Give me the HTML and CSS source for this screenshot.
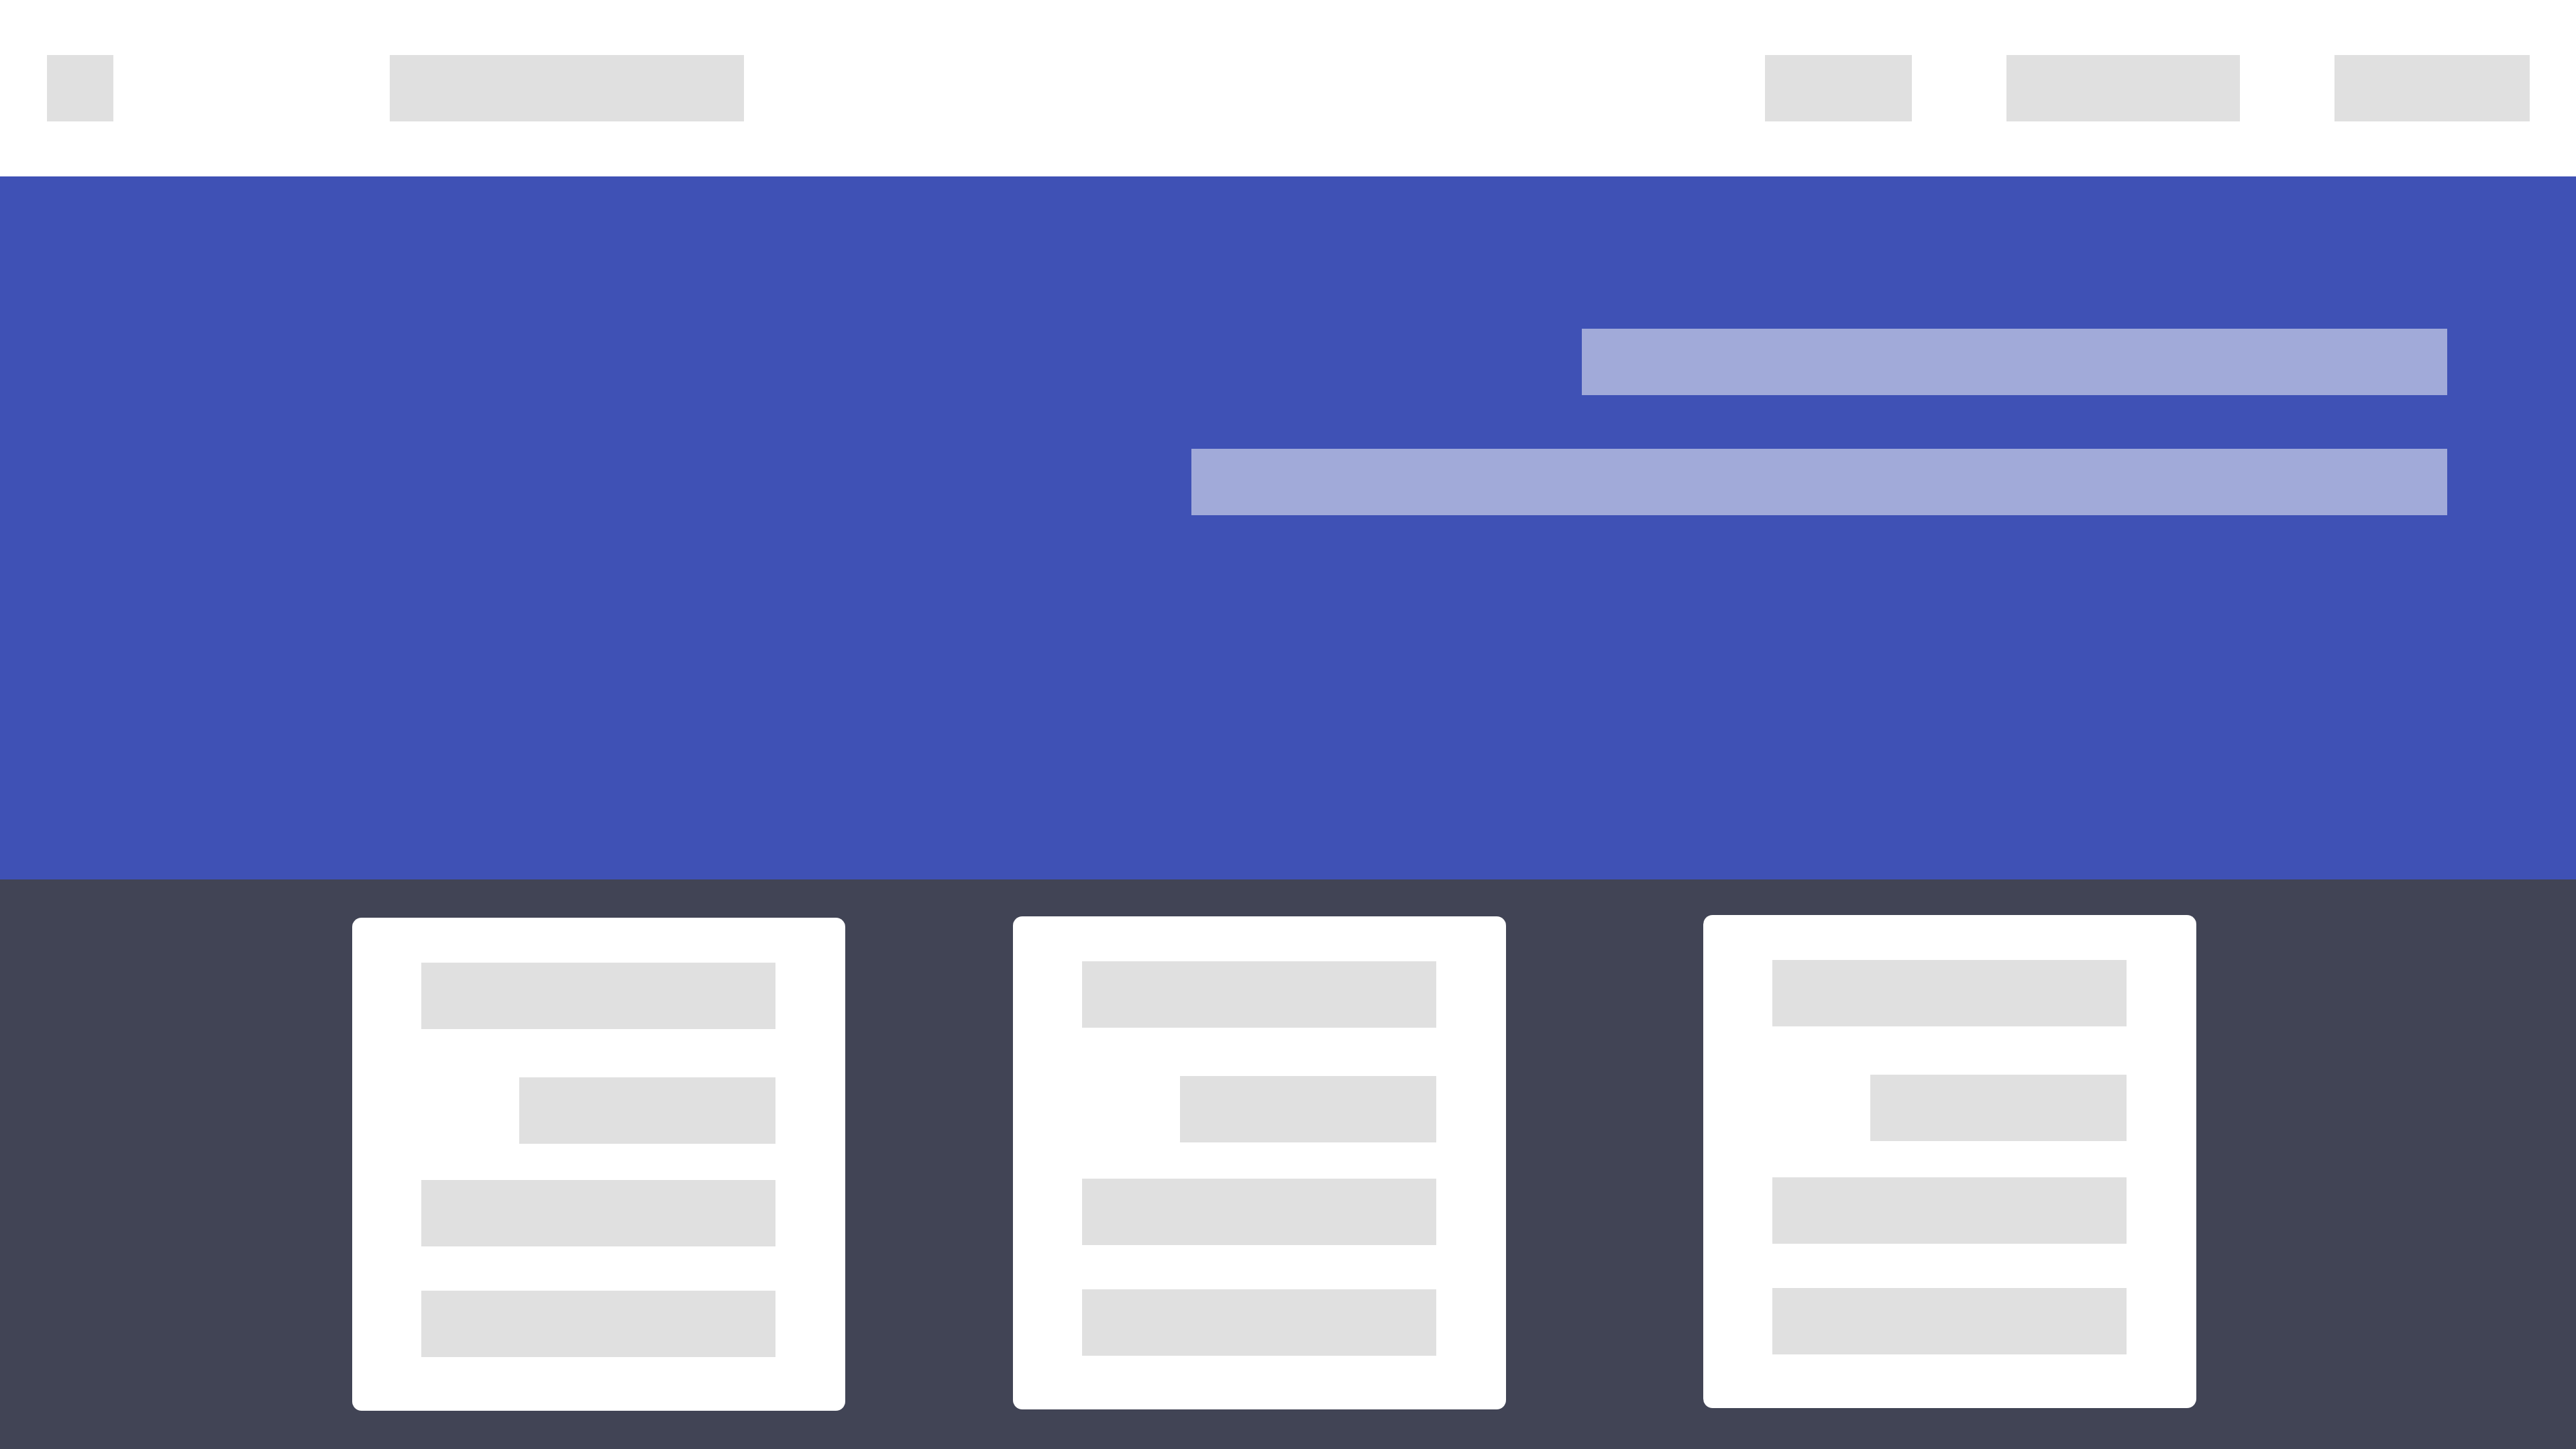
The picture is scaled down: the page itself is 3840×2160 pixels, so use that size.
FILE: index.html
```html
<!DOCTYPE html>
<html>
	<head>
		<meta charset="utf-8" />
		<title>Layout</title>
		<link rel="stylesheet" href="styles.css">
	</head>
	<body>
		<div class="header">
			<div class="block logo"></div>
			<div class="block title"></div>
			<div class="menu">
				<div class="block m1"></div>
				<div class="block m2"></div>
				<div class="block m3"></div>
			</div>
		</div>
		<div class="hero">
			<div class="line l1"></div>
			<div class="line l2"></div>
		</div>
		<div class="cards">
			<div class="card">
				<div class="row"></div>
				<div class="row short"></div>
				<div class="row r3"></div>
				<div class="row r4"></div>
			</div>
			<div class="card c2">
				<div class="row"></div>
				<div class="row short"></div>
				<div class="row r3"></div>
				<div class="row r4"></div>
			</div>
			<div class="card c3">
				<div class="row"></div>
				<div class="row short"></div>
				<div class="row r3"></div>
				<div class="row r4"></div>
			</div>
		</div>
	</body>
</html>
```

FILE: styles.css
```css
*{
	margin: 0;
	padding: 0;
	box-sizing: border-box;
}
body{
	width: 3840px;
	height: 2160px;
	overflow: hidden;
	font-family: "Liberation Sans", Arial, sans-serif;
	background: #414455;
}
/* header */
.header{
	height: 263px;
	background: #fff;
	display: flex;
	align-items: center;
	padding: 0 69px 0 70px;
}
.block{
	height: 99px;
	background: #e0e0e0;
}
.logo{
	width: 99px;
}
.title{
	width: 528px;
	margin-left: 412px;
}
.menu{
	margin-left: auto;
	display: flex;
	gap: 141px;
}
.m1{
	width: 219px;
}
.m2{
	width: 348px;
}
.m3{
	width: 291px;
}
/* hero */
.hero{
	height: 1048px;
	background: #3f51b5;
	display: flex;
	flex-direction: column;
	align-items: flex-end;
	gap: 80px;
	padding: 227px 192px 0 0;
}
.line{
	height: 99px;
	background: #a1aad9;
}
.l1{
	width: 1290px;
}
.l2{
	width: 1872px;
}
/* cards */
.cards{
	height: 849px;
	background: #414455;
	display: flex;
	align-items: flex-start;
	padding: 57px 0 0 525px;
}
.card{
	width: 735px;
	height: 735px;
	background: #fff;
	border-radius: 14px;
	padding: 67px 104px 0 103px;
	display: flex;
	flex-direction: column;
	align-items: flex-end;
}
.c2{
	margin-left: 250px;
	margin-top: -2px;
}
.c3{
	margin-left: 294px;
	margin-top: -4px;
}
.row{
	width: 100%;
	height: 99px;
	background: #e0e0e0;
}
.row.short{
	width: 382px;
	margin-top: 72px;
}
.r3{
	margin-top: 54px;
}
.r4{
	margin-top: 66px;
}
```
